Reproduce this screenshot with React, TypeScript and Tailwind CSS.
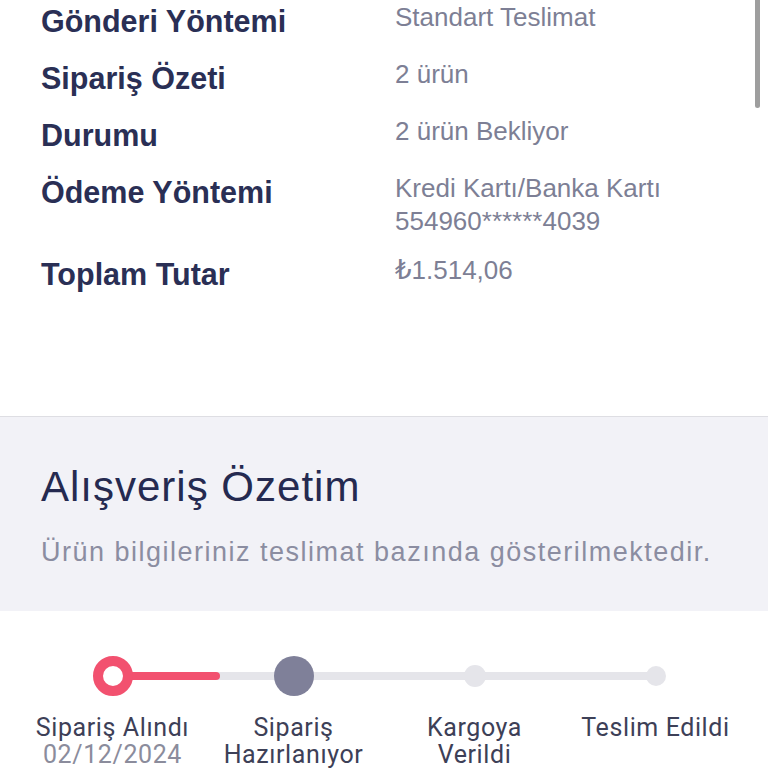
import React from "react";

const rows: { label: string; value: string[] }[] = [
  { label: "Gönderi Yöntemi", value: ["Standart Teslimat"] },
  { label: "Sipariş Özeti", value: ["2 ürün"] },
  { label: "Durumu", value: ["2 ürün Bekliyor"] },
  { label: "Ödeme Yöntemi", value: ["Kredi Kartı/Banka Kartı", "554960******4039"] },
  { label: "Toplam Tutar", value: ["₺1.514,06"] },
];

function Steps() {
  return (
    <div className="relative px-[22px] pt-[45px]" style={{ fontFamily: "Roboto, 'Noto Sans', sans-serif" }}>
      <div className="relative">
        <div className="absolute left-[90px] top-[16px] h-[8px] w-[543px] rounded-full bg-[#e5e5ea]" />
        <div className="absolute left-[90px] top-[16px] h-[8px] w-[108px] rounded-full bg-[#f2516f]" />
        <div className="relative grid grid-cols-4">
          <div className="flex flex-col items-center">
            <div className="flex h-[40px] items-center justify-center">
              <div className="h-[40px] w-[40px] rounded-full border-[10px] border-[#f2516f] bg-white" />
            </div>
            <div className="mt-[18px] text-center text-[25px] leading-[27px] tracking-[0.6px] text-[#3d4057]">
              Sipariş Alındı
            </div>
            <div className="text-center text-[25px] leading-[27px] tracking-[0.6px] text-[#8b8c9c]">02/12/2024</div>
          </div>
          <div className="flex flex-col items-center">
            <div className="flex h-[40px] items-center justify-center">
              <div className="h-[40px] w-[40px] rounded-full bg-[#7f8099]" />
            </div>
            <div className="mt-[18px] text-center text-[25px] leading-[27px] tracking-[0.6px] text-[#3d4057]">
              Sipariş
              <br />
              Hazırlanıyor
            </div>
          </div>
          <div className="flex flex-col items-center">
            <div className="flex h-[40px] items-center justify-center">
              <div className="h-[22px] w-[22px] rounded-full bg-[#e5e5ea]" />
            </div>
            <div className="mt-[18px] text-center text-[25px] leading-[27px] tracking-[0.6px] text-[#3d4057]">
              Kargoya
              <br />
              Verildi
            </div>
          </div>
          <div className="flex flex-col items-center">
            <div className="flex h-[40px] items-center justify-center">
              <div className="h-[20px] w-[20px] rounded-full bg-[#e5e5ea]" />
            </div>
            <div className="mt-[18px] text-center text-[25px] leading-[27px] tracking-[0.6px] text-[#3d4057]">
              Teslim Edildi
            </div>
          </div>
        </div>
      </div>
      <div className="h-[40px]" />
    </div>
  );
}

export default function App() {
  return (
    <div className="min-h-screen bg-white" style={{ fontFamily: "'Liberation Sans', 'DejaVu Sans', Arial, sans-serif" }}>
      <div className="fixed -top-2 right-[8px] z-10 h-[116px] w-[5px] rounded-full bg-[#9e9e9e]" />
      <section className="pl-[41px] pr-[20px] pt-[1px] pb-[121px]">
        <div className="flex flex-col gap-[16px]">
          {rows.map((r) => (
            <div key={r.label} className="flex items-start">
              <div className="w-[354px] shrink-0 text-[30.5px] font-bold leading-[41px] text-[#2a2f55]">{r.label}</div>
              <div className="text-[26px] leading-[33px] text-[#7d7f95]">
                {r.value.map((v) => (
                  <div key={v}>{v}</div>
                ))}
              </div>
            </div>
          ))}
        </div>
      </section>
      <section className="border-t border-[#dedee3] bg-[#f2f2f7] pl-[41px] pr-[20px] pt-[45px] pb-[43px]">
        <h2 className="text-[42px] leading-[50px] tracking-[1px] text-[#252a50]">Alışveriş Özetim</h2>
        <p className="mt-[25px] text-[27px] leading-[31px] tracking-[1.5px] text-[#8b8da1]">
          Ürün bilgileriniz teslimat bazında gösterilmektedir.
        </p>
      </section>
      <Steps />
    </div>
  );
}
